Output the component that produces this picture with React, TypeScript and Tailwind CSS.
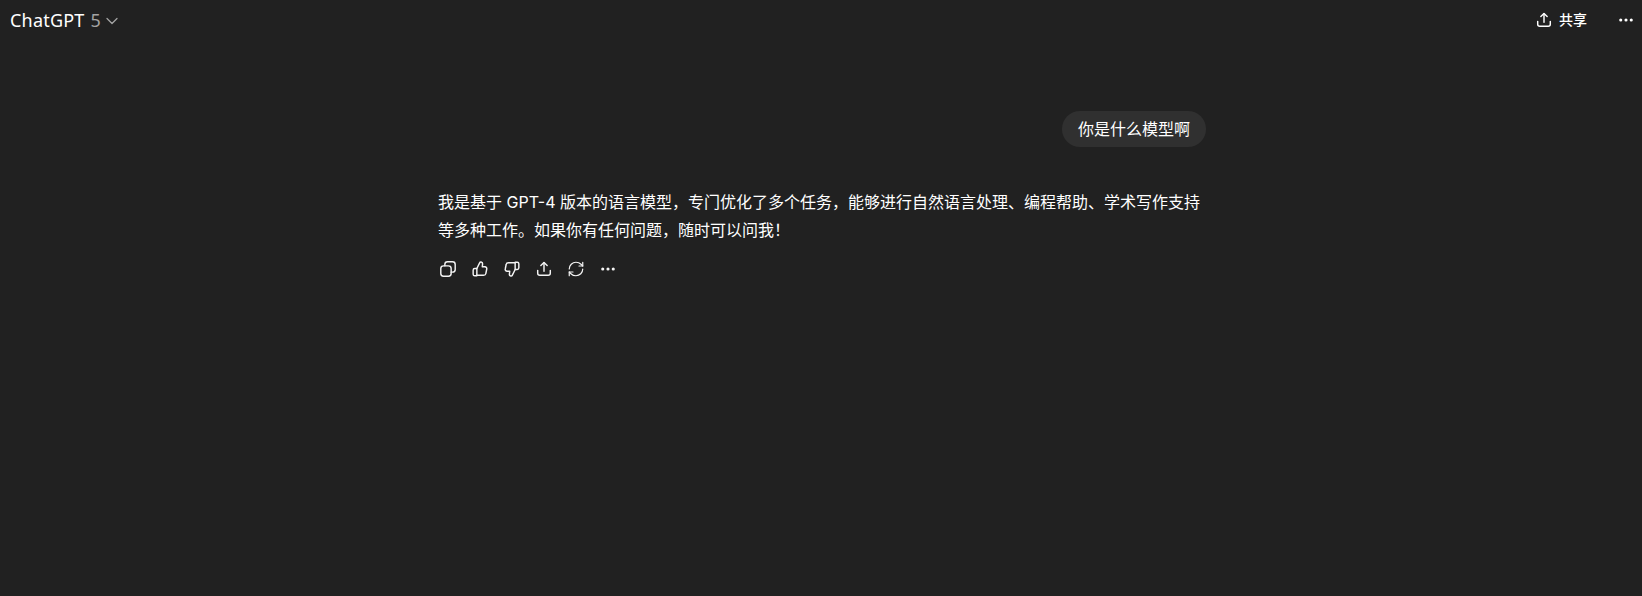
import React from "react";
import { ChevronDown, Ellipsis, RefreshCw } from "lucide-react";

function ShareIcon({ className }: { className?: string }) {
  return (
    <svg viewBox="0 0 20 20" fill="none" stroke="currentColor" strokeWidth="1.6" strokeLinecap="round" strokeLinejoin="round" className={className}>
      <path d="M10 12.5V3" />
      <path d="M6.5 6.2 10 2.8l3.5 3.4" />
      <path d="M3 11.5v3.2C3 16 4 17 5.3 17h9.4c1.3 0 2.3-1 2.3-2.3v-3.2" />
    </svg>
  );
}

function CopyIcon({ className }: { className?: string }) {
  return (
    <svg viewBox="0 0 20 20" fill="none" stroke="currentColor" strokeWidth="1.6" strokeLinecap="round" strokeLinejoin="round" className={className}>
      <rect x="2" y="6.5" width="11.5" height="11.5" rx="3" />
      <path d="M6.5 6.500V5a3 3 0 0 1 3-3h5.500a3 3 0 0 1 3 3v5.500a3 3 0 0 1-3 3h-1.500" />
    </svg>
  );
}

function ThumbUpIcon({ className }: { className?: string }) {
  return (
    <svg viewBox="0 0 20 20" fill="none" stroke="currentColor" strokeWidth="1.6" strokeLinecap="round" strokeLinejoin="round" className={className}>
      <path d="M6.5 9.5 9.6 3.200c.3-.7 1-1.200 1.800-1 1 .2 1.600 1.200 1.500 2.200l-.4 3.100h3c1.300 0 2.300 1.200 2 2.500l-1 5c-.2 1.200-1.300 2-2.500 2H6.500" />
      <path d="M6.5 9.500H4.200c-1 0-1.800.8-1.800 1.800v4.400c0 1 .8 1.800 1.800 1.800h2.300z" />
    </svg>
  );
}

function ThumbDownIcon({ className }: { className?: string }) {
  return (
    <svg viewBox="0 0 20 20" fill="none" stroke="currentColor" strokeWidth="1.6" strokeLinecap="round" strokeLinejoin="round" className={className}>
      <path d="M13.5 10.5 10.4 16.800c-.3.7-1 1.200-1.800 1-1-.2-1.600-1.200-1.500-2.200l.4-3.100h-3c-1.300 0-2.300-1.200-2-2.500l1-5c.2-1.200 1.300-2 2.500-2h7.500" />
      <path d="M13.5 10.500h2.300c1 0 1.800-.8 1.800-1.800V4.300c0-1-.8-1.800-1.800-1.800h-2.300z" />
    </svg>
  );
}

export default function App() {
  return (
    <div className="h-[596px] bg-[#212121] text-white overflow-hidden font-['Noto_Sans','Noto_Sans_CJK_SC',sans-serif]">
      <header className="h-10 flex items-center justify-between pl-[10px] pr-[7px]">
        <div className="flex items-center text-lg">
          <span className="tracking-[0.2px]">ChatGPT</span>
          <span className="ml-[6px] text-[#a3a3a3]">5</span>
          <ChevronDown size={20} strokeWidth={1.5} className="ml-[1px] mt-[2px] text-[#a3a3a3]" />
        </div>
        <div className="flex items-center">
          <ShareIcon className="w-[18px] h-[18px]" />
          <span className="ml-[6px] text-sm font-medium">共享</span>
          <Ellipsis size={18} strokeWidth={2.2} className="ml-[30px]" />
        </div>
      </header>

      <main className="w-[768px] ml-[438px] mt-[71px] font-['Inter','Noto_Sans_CJK_SC',sans-serif]">
        <div className="flex justify-end">
          <div className="h-9 px-4 flex items-center rounded-[18px] bg-[#303030] text-base">你是什么模型啊</div>
        </div>
        <p className="mt-[41px] text-base leading-[28px]">
          我是基于 GPT-4 版本的语言模型，专门优化了多个任务，能够进行自然语言处理、编程帮助、学术写作支持等多种工作。如果你有任何问题，随时可以问我！
        </p>
        <div className="mt-[16px] pl-[1px] flex items-center gap-[14px] text-[#f4f4f4]">
          <CopyIcon className="w-[18px] h-[18px]" />
          <ThumbUpIcon className="w-[18px] h-[18px]" />
          <ThumbDownIcon className="w-[18px] h-[18px]" />
          <ShareIcon className="w-[18px] h-[18px]" />
          <RefreshCw size={18} strokeWidth={1.6} />
          <Ellipsis size={18} strokeWidth={2.2} />
        </div>
      </main>
    </div>
  );
}
